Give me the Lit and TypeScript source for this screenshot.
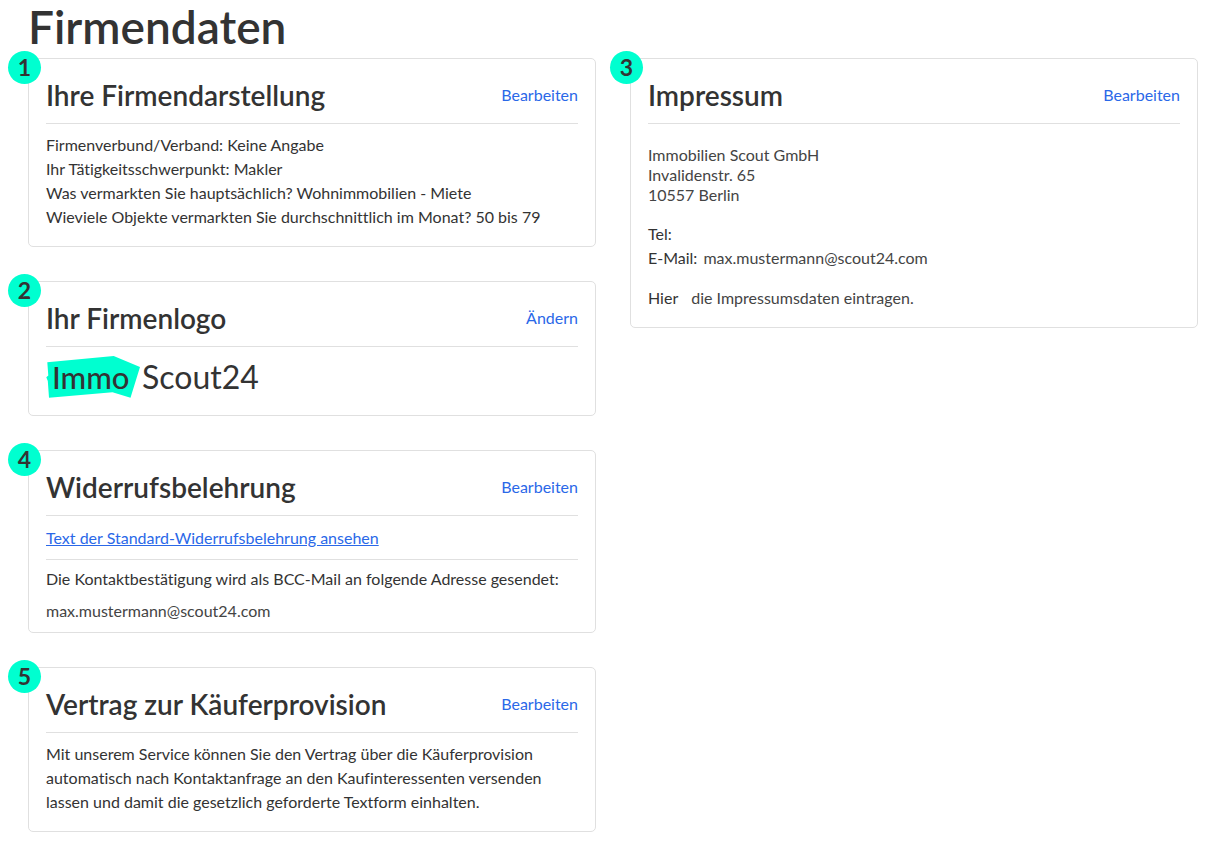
import { LitElement, html, css, TemplateResult } from "lit";
import { customElement, property } from "lit/decorators.js";

@customElement("info-card")
class InfoCard extends LitElement {
  @property() heading = "";
  @property() number = "";
  @property() action = "Bearbeiten";

  static styles = css`
    :host {
      display: block;
      position: relative;
      border: 1px solid #e0e0e0;
      border-radius: 5px;
      padding: 0 17px;
    }
    .badge {
      position: absolute;
      top: -8px;
      left: -21px;
      width: 33px;
      height: 33px;
      border-radius: 50%;
      background: #00ffd0;
      font-size: 23px;
      font-weight: 700;
      line-height: 33px;
      text-align: center;
    }
    .header {
      display: flex;
      align-items: center;
      justify-content: space-between;
      gap: 16px;
      padding: 14px 0 6px;
      border-bottom: 1px solid #e0e0e0;
    }
    h2 {
      margin: 0;
      font-size: 28px;
      font-weight: 600;
      line-height: 44px;
    }
    a {
      color: #2a68e8;
      text-decoration: none;
    }
  `;

  render() {
    return html`
      <span class="badge">${this.number}</span>
      <div class="header">
        <h2>${this.heading}</h2>
        <a href="#" aria-label="${this.heading}: ${this.action}">${this.action}</a>
      </div>
      <slot></slot>
    `;
  }
}

@customElement("app-root")
class AppRoot extends LitElement {
  static styles = css`
    :host {
      display: block;
      padding: 0 27px 10px 28px;
      background: #fff;
      color: #333;
      font-family: Lato, "Liberation Sans", sans-serif;
      font-size: 16px;
      font-variant-ligatures: none;
      line-height: 24px;
    }
    h1 {
      margin: 0;
      padding-bottom: 4px;
      font-size: 46px;
      font-weight: 600;
      line-height: 54px;
    }
    .columns {
      display: grid;
      grid-template-columns: repeat(2, minmax(0, 1fr));
      gap: 34px;
      align-items: start;
    }
    .column {
      display: grid;
      gap: 34px;
    }
    p,
    address {
      margin: 0;
      font-style: normal;
    }
    .body {
      padding: 9px 0 17px;
    }
    .logo {
      display: block;
      width: 214px;
      height: 42px;
    }
    .notice {
      padding: 10px 0 9px;
      border-bottom: 1px solid #e0e0e0;
    }
    .notice a {
      color: #2a68e8;
      text-decoration: underline;
    }
    .copy {
      display: grid;
      gap: 8px;
      padding: 7px 0 9px;
    }
    .imprint {
      padding: 21px 0 17px;
    }
    .soft {
      color: #444;
    }
    address {
      margin-bottom: 17px;
      line-height: 20px;
    }
    .row {
      display: flex;
      gap: 6px;
    }
    .entry {
      margin-top: 16px;
      gap: 13px;
    }
  `;

  private lines(items: string[]): TemplateResult[] {
    return items.map((item) => html`<div>${item}</div>`);
  }

  render() {
    return html`
      <h1>Firmendaten</h1>
      <main class="columns">
        <div class="column">
          <info-card number="1" heading="Ihre Firmendarstellung">
            <div class="body">
              ${this.lines([
                "Firmenverbund/Verband: Keine Angabe",
                "Ihr Tätigkeitsschwerpunkt: Makler",
                "Was vermarkten Sie hauptsächlich? Wohnimmobilien - Miete",
                "Wieviele Objekte vermarkten Sie durchschnittlich im Monat? 50 bis 79",
              ])}
            </div>
          </info-card>

          <info-card number="2" heading="Ihr Firmenlogo" action="Ändern">
            <div class="body">
              <svg class="logo" viewBox="0 0 214 42" role="img" aria-label="ImmoScout24">
                <polygon
                  points="1.3,6.3 67.7,0 94,11 84.5,41.7 66.5,36.3 3,41.7 1.8,25 0.3,21.3 2.3,19.5"
                  fill="#00ffd0"
                />
                <g fill="#333">
                  <text x="6" y="33" font-size="31" font-weight="500">Immo</text>
                  <text x="96" y="33" font-size="32">Scout24</text>
                </g>
              </svg>
            </div>
          </info-card>

          <info-card number="4" heading="Widerrufsbelehrung">
            <div class="notice">
              <a href="#">Text der Standard-Widerrufsbelehrung ansehen</a>
            </div>
            <div class="copy">
              <p>Die Kontaktbestätigung wird als BCC-Mail an folgende Adresse gesendet:</p>
              <p class="soft">max.mustermann@scout24.com</p>
            </div>
          </info-card>

          <info-card number="5" heading="Vertrag zur Käuferprovision">
            <p class="body">
              Mit unserem Service können Sie den Vertrag über die Käuferprovision automatisch nach
              Kontaktanfrage an den Kaufinteressenten versenden lassen und damit die gesetzlich
              geforderte Textform einhalten.
            </p>
          </info-card>
        </div>

        <div class="column">
          <info-card number="3" heading="Impressum">
            <div class="imprint">
              <address class="soft">
                ${this.lines(["Immobilien Scout GmbH", "Invalidenstr. 65", "10557 Berlin"])}
              </address>
              <div>Tel:</div>
              <div class="row">
                <span>E-Mail:</span><span class="soft">max.mustermann@scout24.com</span>
              </div>
              <div class="row entry">
                <span>Hier</span><span class="soft">die Impressumsdaten eintragen.</span>
              </div>
            </div>
          </info-card>
        </div>
      </main>
    `;
  }
}
